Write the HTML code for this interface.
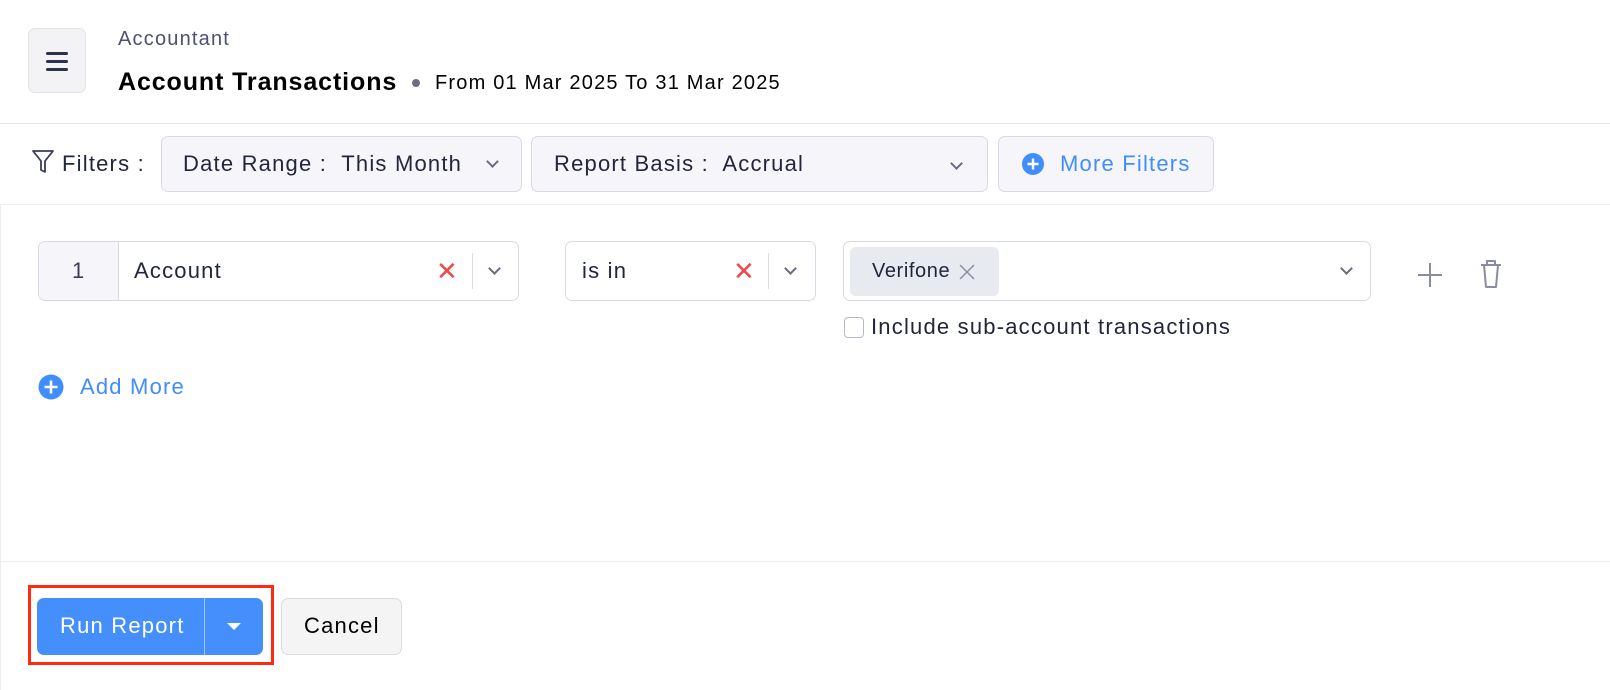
<!DOCTYPE html>
<html><head><meta charset="utf-8"><style>
*{box-sizing:border-box;margin:0;padding:0}
body{width:1610px;height:690px;background:#fff;font-family:"Liberation Sans",sans-serif;color:#21263c;position:relative;overflow:hidden}
.a{position:absolute}
.box{position:absolute;border:1px solid #d9d9e3;border-radius:7px;background:#fff}
.fb{background:#f6f6fa}
.chev{position:absolute;width:9px;height:9px;border-right:2.5px solid #6b6b80;border-bottom:2.5px solid #6b6b80;transform:rotate(45deg)}
.t{position:absolute;font-size:22px;letter-spacing:1.2px;white-space:nowrap}
.rx{position:absolute;color:#f0494d;font-size:26px;line-height:26px}
</style></head><body>
<div class="box" style="left:28px;top:28px;width:58px;height:65px;background:#f3f3f5;border-color:#e2e2e8"></div>
<div class="a" style="left:46px;top:52px;width:22px;height:3px;background:#2d3250;border-radius:2px"></div>
<div class="a" style="left:46px;top:60px;width:22px;height:3px;background:#2d3250;border-radius:2px"></div>
<div class="a" style="left:46px;top:68px;width:22px;height:3px;background:#2d3250;border-radius:2px"></div>
<div class="t" style="left:118px;top:28px;font-size:20px;color:#4d5170">Accountant</div>
<div class="t" style="left:118px;top:68px;font-size:25px;letter-spacing:0.9px;font-weight:bold;color:#000">Account Transactions</div>
<div class="a" style="left:412px;top:79px;width:8px;height:8px;border-radius:50%;background:#6b6f85"></div>
<div class="t" style="left:435px;top:72px;font-size:20px;color:#000">From 01 Mar 2025 To 31 Mar 2025</div>
<div class="a" style="left:0;top:123px;width:1610px;height:1px;background:#e8e8ee"></div>
<svg class="a" style="left:31px;top:149px" width="24" height="26" viewBox="0 0 24 26"><path d="M2 2h20l-8 10v11l-4-2v-9z" fill="none" stroke="#3a3e55" stroke-width="1.8" stroke-linejoin="round"/></svg>
<div class="t" style="left:62px;top:151px">Filters :</div>
<div class="box fb" style="left:161px;top:136px;width:361px;height:56px"></div>
<div class="t" style="left:183px;top:151px">Date Range :&nbsp; This Month</div>
<div class="chev" style="left:488px;top:157px"></div>
<div class="box fb" style="left:531px;top:136px;width:457px;height:56px"></div>
<div class="t" style="left:554px;top:151px">Report Basis :&nbsp; Accrual</div>
<div class="chev" style="left:952px;top:159px"></div>
<div class="box fb" style="left:998px;top:136px;width:216px;height:56px"></div>
<svg class="a" style="left:1021px;top:152px" width="24" height="24"><circle cx="12" cy="12" r="11" fill="#408dfb"/><path d="M12 6.5v11M6.5 12h11" stroke="#fff" stroke-width="2.4"/></svg>
<div class="t" style="left:1060px;top:151px;color:#408dfb">More Filters</div>
<div class="a" style="left:0;top:204px;width:1610px;height:1px;background:#ececf1"></div>
<div class="a" style="left:0;top:204px;width:1px;height:486px;background:#ececf1"></div>
<div class="box" style="left:38px;top:241px;width:481px;height:60px;overflow:hidden"><div class="fb" style="position:absolute;left:0;top:0;width:80px;height:60px;border-right:1px solid #d9d9e3"></div></div>
<div class="t" style="left:72px;top:258px;color:#3a3e55">1</div>
<div class="t" style="left:134px;top:258px">Account</div>
<div class="rx" style="left:436px;top:258px">✕</div>
<div class="a" style="left:472px;top:253px;width:1px;height:36px;background:#dcdce4"></div>
<div class="chev" style="left:490px;top:264px"></div>
<div class="box" style="left:565px;top:241px;width:251px;height:60px"></div>
<div class="t" style="left:582px;top:258px">is in</div>
<div class="rx" style="left:733px;top:258px">✕</div>
<div class="a" style="left:768px;top:253px;width:1px;height:36px;background:#dcdce4"></div>
<div class="chev" style="left:786px;top:264px"></div>
<div class="box" style="left:843px;top:241px;width:528px;height:60px"></div>
<div class="a" style="left:850px;top:247px;width:149px;height:49px;background:#e8eaf1;border-radius:6px"></div>
<div class="t" style="left:872px;top:260px;font-size:20px;letter-spacing:0.6px">Verifone</div>
<svg class="a" style="left:958px;top:263px" width="18" height="18"><path d="M2 2l14 14M16 2L2 16" stroke="#8a8ca0" stroke-width="1.5"/></svg>
<div class="chev" style="left:1342px;top:264px"></div>
<svg class="a" style="left:1416px;top:261px" width="28" height="28"><path d="M14 2v24M2 14h24" stroke="#8a8ca0" stroke-width="2"/></svg>
<svg class="a" style="left:1478px;top:258px" width="26" height="32"><path d="M3 7h20M9 7V3h8v4M6 7l2 22h10l2-22" fill="none" stroke="#8a8ca0" stroke-width="2" stroke-linejoin="round"/></svg>
<div class="a" style="left:844px;top:317px;width:20px;height:21px;border:1.5px solid #b8b8c4;border-radius:4px"></div>
<div class="t" style="left:871px;top:314px">Include sub-account transactions</div>
<svg class="a" style="left:38px;top:374px" width="26" height="26"><circle cx="13" cy="13" r="12.5" fill="#408dfb"/><path d="M13 6.5v13M6.5 13h13" stroke="#fff" stroke-width="2.6"/></svg>
<div class="t" style="left:80px;top:374px;color:#408dfb">Add More</div>
<div class="a" style="left:0;top:561px;width:1610px;height:1px;background:#ececf1"></div>
<div class="a" style="left:28px;top:585px;width:246px;height:80px;border:3px solid #ff2a10"></div>
<div class="a" style="left:37px;top:598px;width:226px;height:57px;background:#448ffb;border-radius:7px"></div>
<div class="a" style="left:204px;top:598px;width:1px;height:57px;background:#9fc4fb"></div>
<div class="t" style="left:60px;top:613px;color:#fff">Run Report</div>
<div class="a" style="left:227px;top:623px;width:0;height:0;border-left:7px solid transparent;border-right:7px solid transparent;border-top:7px solid #fff"></div>
<div class="box" style="left:281px;top:598px;width:121px;height:57px;background:#f4f4f4;border-color:#dcdcdc"></div>
<div class="t" style="left:304px;top:613px;color:#000">Cancel</div>
</body></html>
